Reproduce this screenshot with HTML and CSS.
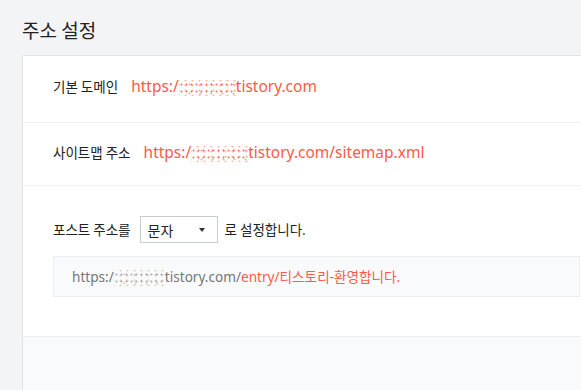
FILE: index.html
```html
<!DOCTYPE html>
<html>
  <head>
    <meta charset="UTF-8">
    <title>주소 설정</title>
    <link rel="stylesheet" href="styles.css">
  </head>
  <body>
    <div class="page">
      <h1 class="title">주소 설정</h1>
      <div class="card">
        <div class="row row-domain">
          <span class="label">기본 도메인</span>
          <span class="url">https:/<span class="blur"></span>tistory.com</span>
        </div>
        <div class="row row-sitemap">
          <span class="label">사이트맵 주소</span>
          <span class="url">https:/<span class="blur"></span>tistory.com/sitemap.xml</span>
        </div>
        <div class="row row-post">
          <div class="post-line">
            <span class="label">포스트 주소를</span>
            <div class="select">
              <span>문자</span>
              <span class="caret"></span>
            </div>
            <span class="label">로 설정합니다.</span>
          </div>
          <div class="preview">https:/<span class="blur blur-grey"></span>tistory.com/<span class="hl">entry/티스토리-환영합니다.</span></div>
        </div>
        <div class="card-foot"></div>
      </div>
    </div>
  </body>
</html>
```

FILE: styles.css
```css
* { margin: 0; padding: 0; box-sizing: border-box; }
body { background: #f3f4f6; overflow: hidden; font-family: "Noto Sans", "Noto Sans CJK KR", sans-serif; color: #222; }
.page { padding: 16px 0 0 22px; }
.title { font-size: 19px; font-weight: normal; line-height: 28px; margin-bottom: 11px; font-family: "Noto Sans CJK KR", sans-serif; }
.card { background: #fff; border: 1px solid #e1e4ea; margin-right: -20px; }
.row { display: flex; align-items: center; padding: 0 30px; border-bottom: 1px solid #eef0f3; }
.row-domain { padding-top: 19px; padding-bottom: 24px; }
.row-sitemap { padding-top: 18px; padding-bottom: 21px; }
.row-post { display: block; padding-top: 30px; padding-bottom: 39px; border-bottom: 1px solid #eceef2; }
.label { font-size: 13.5px; line-height: 23px; font-family: "Noto Sans CJK KR", sans-serif; color: #222; }
.url { font-size: 15.5px; line-height: 23px; color: #ff5a4a; margin-left: 13px; }
.blur { display: inline-block; width: 57px; height: 16px; vertical-align: middle; background-image: radial-gradient(circle, rgba(255, 80, 64, .8) 0.8px, transparent 1.2px), radial-gradient(circle, rgba(255, 160, 110, .75) 0.8px, transparent 1.2px), radial-gradient(circle, rgba(240, 110, 150, .6) 0.8px, transparent 1.2px); background-size: 5px 7px, 7px 5px, 11px 9px; background-position: 0 1px, 3px 3px, 5px 0; }
.blur-grey { width: 51px; background-image: radial-gradient(circle, rgba(120, 120, 130, .6) 0.8px, transparent 1.2px), radial-gradient(circle, rgba(210, 170, 120, .6) 0.8px, transparent 1.2px), radial-gradient(circle, rgba(140, 170, 200, .5) 0.8px, transparent 1.2px); }
.post-line { display: flex; align-items: center; gap: 9px; }
.post-line .select + .label { margin-left: -2px; }
.select { display: flex; align-items: center; justify-content: space-between; width: 78px; height: 27px; border: 1px solid #c8cdd5; padding: 0 12px 0 7px; font-size: 14px; font-family: "Noto Sans CJK KR", sans-serif; color: #222; }
.caret { width: 0; height: 0; border-left: 3.5px solid transparent; border-right: 3.5px solid transparent; border-top: 4px solid #333; }
.preview { margin-top: 13px; margin-right: -10px; height: 41px; line-height: 39px; padding: 0 18px; background: #f9fafb; border: 1px solid #eceef2; font-size: 13.6px; color: #777; white-space: nowrap; }
.hl { color: #ff5a4a; }
.card-foot { background: #f9fafb; height: 60px; }
```
